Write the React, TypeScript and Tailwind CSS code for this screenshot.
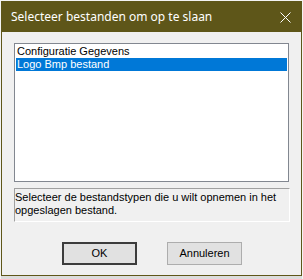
import React from "react";

const items = ["Configuratie Gegevens", "Logo Bmp bestand"];

const App: React.FC = () => {
  const selected = 1;

  return (
    <div className="w-[303px] h-[279px] bg-[#f3f3f3] pt-px pl-px overflow-hidden font-['Liberation_Sans',Arial,sans-serif]">
      {/* dialog window */}
      <div className="w-[301px] h-[275px] border border-[#5e5619] bg-[#f0f0f0] flex flex-col">
        <div className="h-[30px] shrink-0 bg-[#5e5619] flex items-center justify-between pl-[9px] pr-[10px] text-white text-[12px] font-['Noto_Sans',sans-serif]">
          <span className="leading-none">Selecteer bestanden om op te slaan</span>
          <svg width="11" height="11" viewBox="0 0 11 11" aria-label="Close">
            <path d="M0.5 0.5 L10.5 10.5 M10.5 0.5 L0.5 10.5" stroke="white" strokeWidth="1" />
          </svg>
        </div>

        <div className="flex flex-col pl-[12px] pt-[11px] text-[11px] text-black">
          <div className="w-[275px] h-[139px] border border-[#828790] bg-white p-px">
            {items.map((it, i) => (
              <div
                key={it}
                className={`h-[13px] leading-[13px] pl-px ${
                  i === selected ? "bg-[#0078d7] text-white" : ""
                }`}
              >
                {it}
              </div>
            ))}
          </div>

          <div className="mt-[6px] w-[276px] h-[34px] border border-t-[#a0a0a0] border-l-[#a0a0a0] border-r-white border-b-white pt-[2px] leading-[13px]">
            Selecteer de bestandstypen die u wilt opnemen in het opgeslagen bestand.
          </div>

          <div className="flex mt-[20px] pl-[48px] gap-[30px]">
            <button className="w-[75px] h-[23px] border-2 border-[#3c3c3c] bg-[#e1e1e1] leading-none">
              OK
            </button>
            <button className="w-[75px] h-[23px] border border-[#adadad] bg-[#e1e1e1] leading-none">
              Annuleren
            </button>
          </div>
        </div>
      </div>
      <div className="h-[3px] w-[301px] bg-[#dcdcdc]" />
    </div>
  );
};

export default App;
